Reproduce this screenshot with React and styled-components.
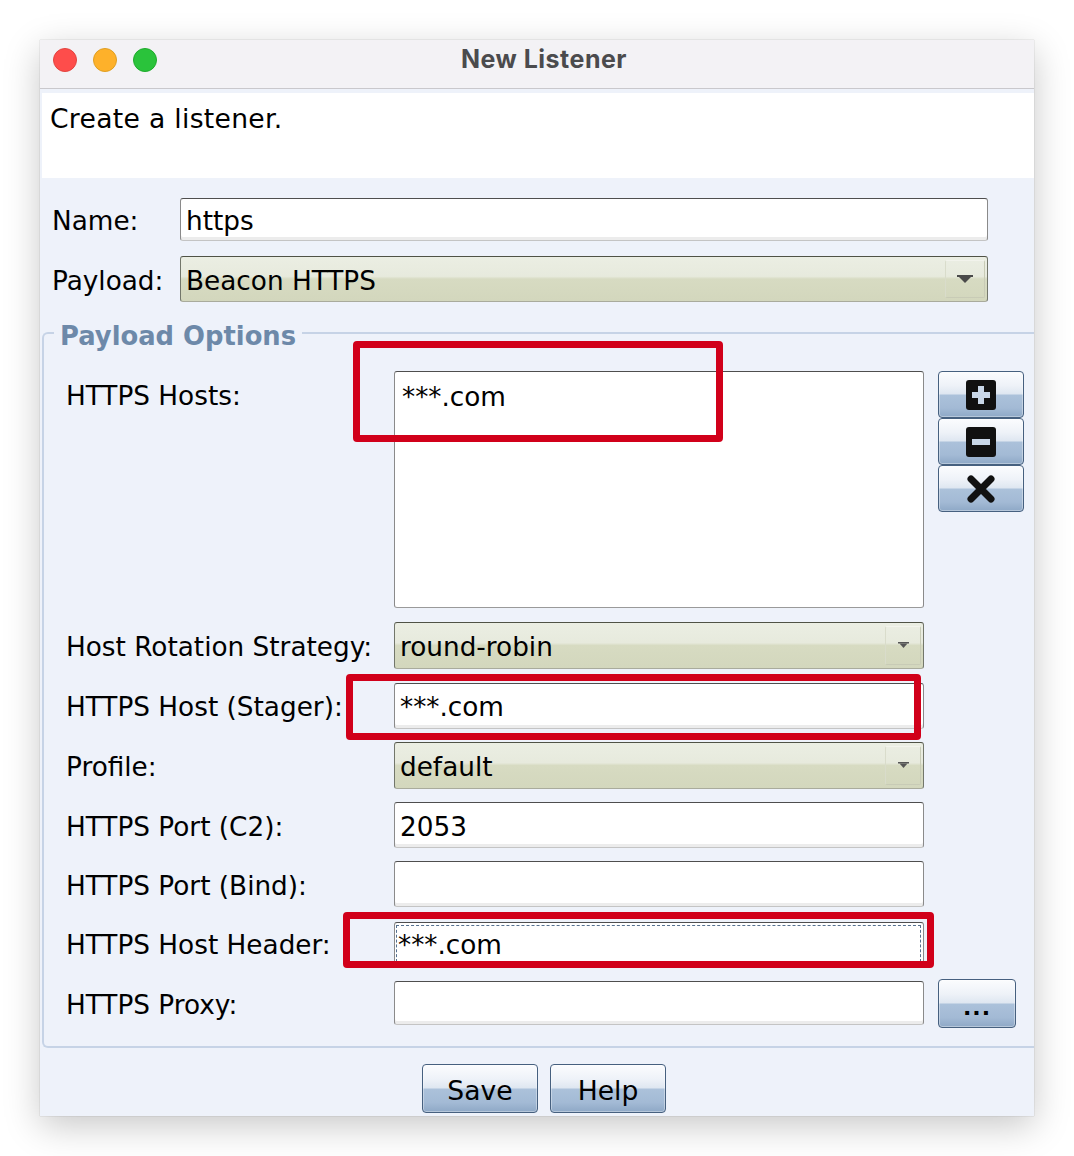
import React from "react";
import styled, { createGlobalStyle, css } from "styled-components";

const FONT = `"DejaVu Sans", Verdana, sans-serif`;

const GlobalStyle = createGlobalStyle`
  html, body { margin: 0; padding: 0; background: #ffffff; }
  body { font-family: ${FONT}; }
  * { box-sizing: border-box; }
`;

const Page = styled.div`
  padding: 40px 40px 40px 40px;
  width: 1074px;
`;

const Window = styled.div`
  position: relative;
  width: 994px;
  height: 1076px;
  background: #eef2fa;
  box-shadow: 0 10px 34px rgba(0, 0, 0, 0.22), 0 0 1px rgba(0, 0, 0, 0.3);
  overflow: hidden;
`;

const TitleBar = styled.div`
  height: 49px;
  background: #f3f2f5;
  border-bottom: 1px solid #c9c8cc;
  display: grid;
  grid-template-columns: 1fr auto 1fr;
  align-items: center;
  padding-left: 14px;
`;

const Lights = styled.div`
  display: flex;
  gap: 16px;
  margin-left: -1px;
  margin-top: -9px;
`;

const Light = styled.span`
  width: 24px;
  height: 24px;
  border-radius: 50%;
  background: ${(p) => p.$c};
  border: 1px solid ${(p) => p.$b};
`;

const Title = styled.div`
  font-family: Inter, "Open Sans", sans-serif;
  font-weight: 700;
  font-size: 25px;
  letter-spacing: 0.5px;
  color: #4b4b4d;
  margin-top: -10px;
`;

const Body = styled.div`
  padding: 4px 0 0 2px;
`;

const Description = styled.div`
  height: 85px;
  background: #ffffff;
  padding: 10px 8px 0 8px;
  font-size: 26.6px;
  letter-spacing: 0.3px;
  line-height: 32px;
  color: #000;
`;

const TopForm = styled.div`
  display: grid;
  grid-template-columns: 128px 1fr;
  grid-template-rows: 43px 46px;
  row-gap: 15px;
  padding: 20px 46px 0 10px;
`;

const Label = styled.div`
  font-size: 26.3px;
  line-height: 32px;
  color: #000;
  white-space: nowrap;
  align-self: ${(p) => (p.$top ? "start" : "center")};
  padding-top: ${(p) => (p.$top ? "9px" : "3px")};
`;

const Field = styled.div`
  background: #ffffff;
  border: 1.5px solid #8a8a8a;
  border-top-color: #4e4e4e;
  border-bottom-color: #c4c4c4;
  border-radius: 3px;
  box-shadow: inset 0 -3px 0 #ececec;
  font-size: 26.3px;
  line-height: 32px;
  color: #000;
  display: flex;
  align-items: center;
  padding: 3px 0 0 5px;
  white-space: nowrap;
  position: relative;
  height: ${(p) => p.$h || "100%"};
  align-self: center;
  ${(p) =>
    p.$focused &&
    css`
      padding-left: 3px;
      &::after {
        content: "";
        position: absolute;
        inset: 2px 2px 3px 1px;
        border: 1px dashed #55708f;
        pointer-events: none;
      }
    `}
`;

const TextArea = styled(Field)`
  align-items: flex-start;
  align-self: start;
  padding: 9px 0 0 7px;
  box-shadow: none;
  border-bottom-color: #9a9a9a;
`;

const Combo = styled.div`
  display: flex;
  align-items: stretch;
  height: ${(p) => p.$h || "100%"};
  align-self: center;
  border: 1.5px solid #72766a;
  border-top-color: #4f5245;
  border-bottom-color: #a9ab9c;
  border-radius: 3px;
  background: linear-gradient(
    #ebeee3 0%,
    #e7eadd 44%,
    #d7dbc2 50%,
    #d3d7bd 100%
  );
  font-size: 26.3px;
  line-height: 32px;
  color: #000;
`;

const ComboValue = styled.div`
  flex: 1;
  display: flex;
  align-items: center;
  padding: 3px 0 0 5px;
  white-space: nowrap;
`;

const ArrowBox = styled.div`
  width: ${(p) => (p.$big ? "40px" : "36px")};
  margin: 3px 2px 3px 0;
  border: 1px solid #c8cbb6;
  border-top-color: #f2f3ec;
  border-left-color: #d9dccb;
  border-radius: 2px;
  display: flex;
  align-items: center;
  justify-content: center;
`;

const Options = styled.fieldset`
  margin: 15px 0 0 0;
  padding: 0;
  border: 2px solid #c6d3e6;
  border-right: none;
  border-radius: 6px 0 0 6px;
  min-width: 0;
`;

const Legend = styled.legend`
  margin-left: 10px;
  padding: 6px 6px 0;
  font-size: 25.8px;
  line-height: 26px;
  font-weight: 700;
  color: #6d89a9;
`;

const OptionsGrid = styled.div`
  display: grid;
  grid-template-columns: 314px 530px 86px;
  grid-template-rows: 238px 47px 46px 47px 46px 46px 46px 46px;
  column-gap: 14px;
  row-gap: 13.3px;
  padding: 22px 0 20px 22px;
`;

const ButtonStack = styled.div`
  display: flex;
  flex-direction: column;
  align-self: start;
`;

const blueButton = css`
  border: 1.5px solid #46607f;
  border-radius: 4px;
  background: linear-gradient(
    #fbfcfe 0%,
    #eef2f8 30%,
    #dfe7f1 48%,
    #abc1da 52%,
    #a3bad5 80%,
    #8ea8c6 100%
  );
  box-shadow: inset 0 0 0 1px rgba(255, 255, 255, 0.35);
  display: flex;
  align-items: center;
  justify-content: center;
  font-family: ${FONT};
  color: #000;
  padding: 0;
`;

const IconButton = styled.button`
  ${blueButton};
  width: 86px;
  height: 47px;
`;

const MoreButton = styled.button`
  ${blueButton};
  width: 78px;
  height: 49px;
  font-size: 22px;
  font-weight: 700;
  letter-spacing: 1px;
  padding-top: 8px;
  align-self: center;
`;

const Footer = styled.div`
  display: flex;
  justify-content: center;
  gap: 12px;
  padding: 16px 0 0 12px;
`;

const DialogButton = styled.button`
  ${blueButton};
  width: 116px;
  height: 49px;
  font-size: 26.6px;
  line-height: 32px;
  padding-top: 4px;
`;

const Annotation = styled.div`
  position: absolute;
  left: ${(p) => p.$x}px;
  top: ${(p) => p.$y}px;
  width: ${(p) => p.$w}px;
  height: ${(p) => p.$h}px;
  border: 7px solid #d1001a;
  border-radius: 4px;
  pointer-events: none;
`;

const Arrow = ({ big }) =>
  big ? (
    <svg width="16" height="9" viewBox="0 0 16 9">
      <rect x="0" y="0" width="16" height="2" fill="#4a4a4a" />
      <path d="M2 2 H14 L8 8 Z" fill="#4a4a4a" />
    </svg>
  ) : (
    <svg width="11" height="7" viewBox="0 0 11 7">
      <rect x="0" y="0" width="11" height="1.5" fill="#555" />
      <path d="M1.5 1.5 H9.5 L5.5 6 Z" fill="#555" />
    </svg>
  );

const PlusIcon = () => (
  <svg width="32" height="32" viewBox="0 0 32 32">
    <rect x="1" y="1" width="30" height="30" rx="3" fill="#111" />
    <path d="M13 7 H19 V13 H25 V19 H19 V25 H13 V19 H7 V13 H13 Z" fill="#c9d7e8" />
  </svg>
);

const MinusIcon = () => (
  <svg width="32" height="32" viewBox="0 0 32 32">
    <rect x="1" y="1" width="30" height="30" rx="3" fill="#111" />
    <rect x="7" y="13" width="18" height="6" fill="#c9d7e8" />
  </svg>
);

const CloseIcon = () => (
  <svg width="30" height="30" viewBox="0 0 30 30">
    <path
      d="M5 5 L25 25 M25 5 L5 25"
      stroke="#111"
      strokeWidth="7"
      strokeLinecap="round"
    />
  </svg>
);

export default function App() {
  return (
    <>
      <GlobalStyle />
      <Page>
        <Window>
          <TitleBar>
            <Lights>
              <Light $c="#fe4d4b" $b="#e2443f" />
              <Light $c="#feb12a" $b="#df9f22" />
              <Light $c="#2ac33b" $b="#1eab2b" />
            </Lights>
            <Title>New Listener</Title>
            <span />
          </TitleBar>
          <Body>
            <Description>Create a listener.</Description>
            <TopForm>
              <Label>Name:</Label>
              <Field>https</Field>
              <Label>Payload:</Label>
              <Combo>
                <ComboValue>Beacon HTTPS</ComboValue>
                <ArrowBox $big>
                  <Arrow big />
                </ArrowBox>
              </Combo>
            </TopForm>
            <Options>
              <Legend>Payload Options</Legend>
              <OptionsGrid>
                <Label $top>HTTPS Hosts:</Label>
                <TextArea $h="237px">***.com</TextArea>
                <ButtonStack>
                  <IconButton aria-label="Add">
                    <PlusIcon />
                  </IconButton>
                  <IconButton aria-label="Remove">
                    <MinusIcon />
                  </IconButton>
                  <IconButton aria-label="Clear">
                    <CloseIcon />
                  </IconButton>
                </ButtonStack>

                <Label>Host Rotation Strategy:</Label>
                <Combo>
                  <ComboValue>round-robin</ComboValue>
                  <ArrowBox>
                    <Arrow />
                  </ArrowBox>
                </Combo>
                <span />

                <Label>HTTPS Host (Stager):</Label>
                <Field>***.com</Field>
                <span />

                <Label>Profile:</Label>
                <Combo>
                  <ComboValue>default</ComboValue>
                  <ArrowBox>
                    <Arrow />
                  </ArrowBox>
                </Combo>
                <span />

                <Label>HTTPS Port (C2):</Label>
                <Field>2053</Field>
                <span />

                <Label>HTTPS Port (Bind):</Label>
                <Field />
                <span />

                <Label>HTTPS Host Header:</Label>
                <Field $focused $h="44px">***.com</Field>
                <span />

                <Label>HTTPS Proxy:</Label>
                <Field $h="44px" />
                <MoreButton>...</MoreButton>
              </OptionsGrid>
            </Options>
            <Footer>
              <DialogButton>Save</DialogButton>
              <DialogButton>Help</DialogButton>
            </Footer>
          </Body>
          <Annotation $x={313} $y={301} $w={370} $h={101} />
          <Annotation $x={306} $y={634} $w={575} $h={66} />
          <Annotation $x={303} $y={872} $w={591} $h={56} />
        </Window>
      </Page>
    </>
  );
}
